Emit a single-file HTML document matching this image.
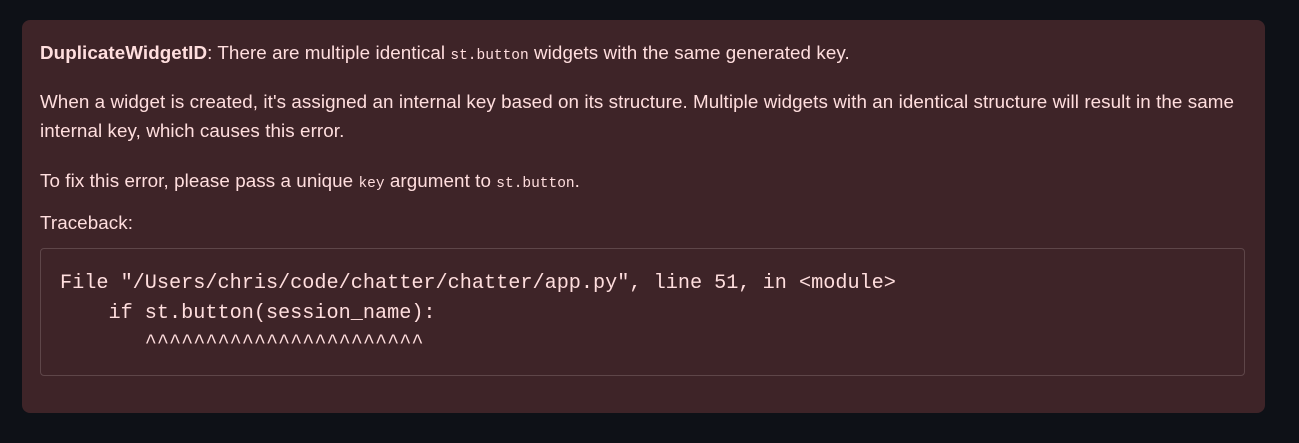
<!DOCTYPE html>
<html><head><meta charset="utf-8"><style>
html,body{margin:0;padding:0;background:#0e1117;width:1299px;height:443px;overflow:hidden}
.box{position:absolute;left:22px;top:20px;width:1243px;height:393px;background:#3e2428;border-radius:8px;color:#ffdede;font-family:"Liberation Sans",sans-serif;font-size:18.8px}
.l{position:absolute;left:18px;white-space:nowrap;line-height:22px;letter-spacing:0.08px}
code{font-family:"Liberation Mono",monospace;font-size:14.5px;letter-spacing:0}
.pre{position:absolute;left:18px;top:228px;width:1203px;height:126px;border:1px solid #5e4649;border-radius:4px;font-family:"Liberation Mono",monospace;font-size:20.2px;line-height:30px;color:#ffdede;white-space:pre}
.pre div{position:absolute;left:19px;top:20px}
</style></head><body>
<div class="box">
<div class="l" style="top:22px"><b>DuplicateWidgetID</b>: There are multiple identical <code>st.button</code> widgets with the same generated key.</div>
<div class="l" style="top:71px">When a widget is created, it's assigned an internal key based on its structure. Multiple widgets with an identical structure will result in the same</div>
<div class="l" style="top:100px">internal key, which causes this error.</div>
<div class="l" style="top:150px">To fix this error, please pass a unique <code>key</code> argument to <code>st.button</code>.</div>
<div class="l" style="top:192px">Traceback:</div>
<div class="pre"><div>File "/Users/chris/code/chatter/chatter/app.py", line 51, in &lt;module&gt;
    if st.button(session_name):
       ^^^^^^^^^^^^^^^^^^^^^^^</div></div>
</div>
</body></html>
